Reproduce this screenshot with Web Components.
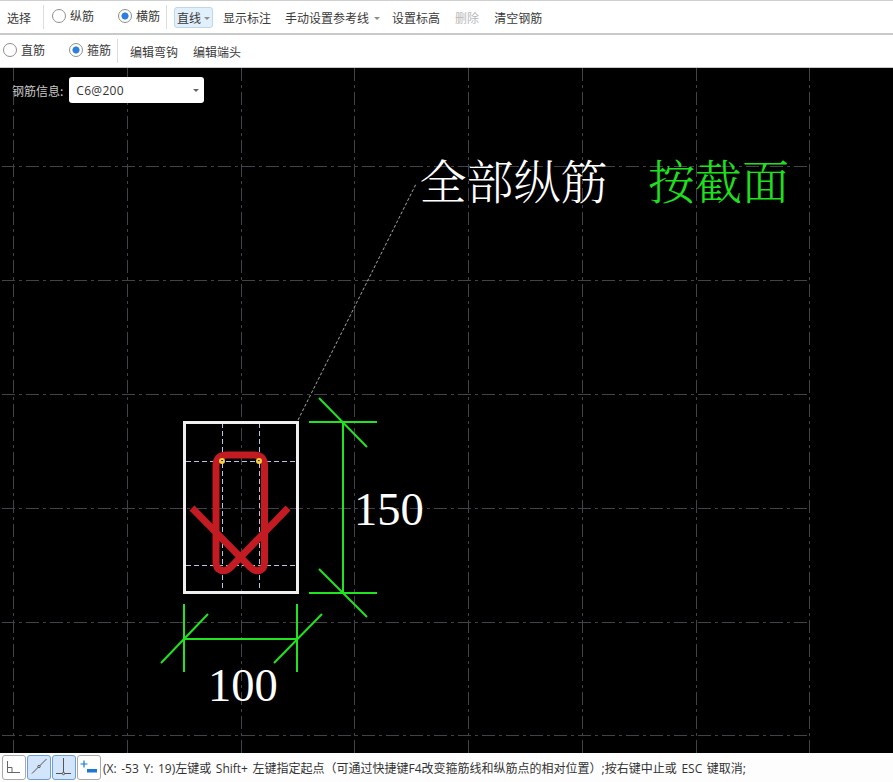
<!DOCTYPE html>
<html lang="zh"><head><meta charset="utf-8"><title>钢筋编辑</title>
<style>
html,body{margin:0;padding:0;height:782px;overflow:hidden;background:#000;font-family:"Open Sans","Noto Sans CJK SC",sans-serif;font-size:12px;color:#333}
</style></head>
<body>
<rebar-app></rebar-app>
<script>
const def=(name,html)=>customElements.define(name,class extends HTMLElement{
  constructor(){super();this.attachShadow({mode:'open'}).innerHTML=html}
});
def('tool-bar',`<style>:host{display:flex;align-items:center;box-sizing:border-box;background:#fff;height:var(--h,33px);border-top:var(--bt,0) solid #cfcfcf;border-bottom:var(--bb,2px) solid #c8c9cb;padding-left:var(--pl,7px);flex:none;white-space:nowrap}</style><slot></slot>`);
def('tool-sep',`<style>:host{display:block;width:1px;height:24px;background:#dcdcdc;flex:none}</style>`);
def('tool-item',`<style>:host{display:inline-flex;align-items:center;height:21px;box-sizing:border-box;font:12px/21px "Open Sans","Noto Sans CJK SC",sans-serif;color:#3a3a3a;flex:none;position:relative;top:1px}
:host([disabled]){color:#b9b9b9}
:host([active]){background:#e2f0fb;border:1px solid #bcd7ee;border-radius:3px;padding:2px 2px 0;line-height:17px;top:0}
i{display:none;width:0;height:0;border:3px solid transparent;border-top-color:#8d8d8d;border-bottom:0;margin-left:var(--cg,4px)}
:host([caret]) i{display:block}</style><slot></slot><i></i>`);
def('radio-opt',`<style>:host{display:inline-flex;align-items:center;gap:4px;font:12px/20px "Open Sans","Noto Sans CJK SC",sans-serif;color:#3a3a3a;flex:none}
b{display:block;box-sizing:border-box;width:14px;height:14px;border:1px solid #8e8e8e;border-radius:50%;background:#fff;position:relative;top:-1px}
:host([checked]) b{background:radial-gradient(circle at center,#2e7fdc 0 3.2px,#fff 3.9px)}
</style><b></b><slot></slot>`);
def('rebar-select',`<style>:host{display:flex;align-items:center;box-sizing:border-box;width:135px;height:26px;background:#fff;border-radius:3px;padding:0 5px 0 7px;font:12px "Open Sans","Liberation Sans",sans-serif;letter-spacing:.3px;color:#333;justify-content:space-between}
i{display:block;border:3px solid transparent;border-top-color:#666;border-bottom:0}</style><slot></slot><i></i>`);
def('rebar-field',`<style>:host{position:absolute;left:12px;top:9px;display:flex;align-items:center;gap:6px;font:12px "Noto Sans CJK SC",sans-serif;color:#c9c9c9;z-index:1}</style><slot></slot>`);
def('snap-btn',`<style>:host{display:block;box-sizing:border-box;width:24px;height:25px;border:1px solid #a9a9a9;border-radius:3px;background:#fff;flex:none}
:host([on]){background:#d3e5fa;border-color:#6d9fd4}
::slotted(svg){display:block;width:22px;height:23px}</style><slot></slot>`);
def('status-bar',`<style>:host{display:flex;align-items:center;box-sizing:border-box;height:29px;background:#fdfdfd;padding-left:2px;gap:1px;flex:none;font:12px "Open Sans","Noto Sans CJK SC",sans-serif;word-spacing:1.5px;color:#333;white-space:nowrap}</style><slot></slot>`);
const H=[166,280,394,508,622,735],V=[13,127,241,354,468,582,696,809];
const grid=H.map(y=>`<line x1="2" x2="809.5" y1="${y+.5}" y2="${y+.5}"/>`).join('')+V.map(x=>`<line x1="${x+.5}" x2="${x+.5}" y1="68" y2="753"/>`).join('');
def('drawing-canvas',`<style>:host{display:block;position:relative;flex:1;background:#000;overflow:hidden}
svg{position:absolute;left:0;top:0}
text{font-family:"Liberation Serif","Noto Sans CJK SC",serif}
.cjk{font-family:"Noto Serif CJK SC","Noto Sans CJK SC",serif;font-size:47px;font-weight:300}
</style><slot></slot>
<svg width="893" height="685" viewBox="0 68 893 685">
<g stroke="#42424a" stroke-width="1" stroke-dasharray="13 4 3 4" fill="none">${grid}</g>
<path d="M298 420L416 184" stroke="#a8a8a8" stroke-width="1" stroke-dasharray="3 2" fill="none"/>
<g stroke="#b7c4e4" stroke-width="1" stroke-dasharray="5 3" fill="none">
<path d="M222.5 423V592M259.5 423V592M186 461.5H296M186 565.5H296"/></g>
<rect x="184.5" y="422.5" width="113" height="170" fill="none" stroke="#efefef" stroke-width="3"/>
<path d="M192 508L250 567C256 573 264.5 572 264.5 562V466Q264.5 455 253.5 455H227Q216 455 216 466V562C216 572 225 573 231 567L288 508" fill="none" stroke="#c31b22" stroke-width="7"/>
<g fill="none" stroke="#f4d33a" stroke-width="2"><circle cx="222" cy="461" r="2"/><circle cx="259" cy="461" r="2"/></g>
<g stroke="#1fe41f" stroke-width="2" fill="none">
<path d="M343 422V593M309 422H377M309 593H377M319 398L367 447M319 569L367 617"/>
<path d="M184 639H297M184 604V672M297 604V672M161 663L208 614M274 663L322 614"/></g>
<text x="354" y="525" font-size="46.5" fill="#fff">150</text>
<text x="208" y="701" font-size="46.5" fill="#fff">100</text>
<text class="cjk" x="419.500" y="199" fill="#fff">全部纵筋</text>
<text class="cjk" x="648" y="199" fill="#1fe01f">按截面</text>
</svg>`);
def('rebar-app',`<style>:host{display:flex;flex-direction:column;width:893px;height:782px}</style>
<tool-bar style="--h:35px;--bt:1px">
 <tool-item>选择</tool-item><tool-sep style="margin:0 8px 0 12px"></tool-sep>
 <radio-opt>纵筋</radio-opt><radio-opt checked style="margin-left:24px">横筋</radio-opt>
 <tool-sep style="margin:0 7px 0 6px"></tool-sep>
 <tool-item active caret style="--cg:3px">直线</tool-item>
 <tool-item style="margin-left:10px">显示标注</tool-item>
 <tool-item caret style="margin-left:14px;--cg:5px">手动设置参考线</tool-item>
 <tool-item style="margin-left:12px">设置标高</tool-item>
 <tool-item disabled style="margin-left:15px">删除</tool-item>
 <tool-item style="margin-left:15px">清空钢筋</tool-item>
</tool-bar>
<tool-bar style="--h:33px;--bb:1px;--pl:3px">
 <radio-opt>直筋</radio-opt><radio-opt checked style="margin-left:24px">箍筋</radio-opt>
 <tool-sep style="margin:0 12px 0 6px"></tool-sep>
 <tool-item>编辑弯钩</tool-item><tool-item style="margin-left:15px">编辑端头</tool-item>
</tool-bar>
<drawing-canvas><rebar-field>钢筋信息:<rebar-select>C6@200</rebar-select></rebar-field></drawing-canvas>
<status-bar>
 <snap-btn><svg viewBox="0 0 22 23" fill="none" stroke="#666" stroke-width="1"><path d="M4.500 5V16.500H17M4.500 11.500H9V16.500"/></svg></snap-btn>
 <snap-btn on><svg viewBox="0 0 22 23" fill="none" stroke="#555" stroke-width="1"><path d="M4 17.500L18.500 3"/><circle cx="11" cy="10.500" r="1.200" fill="#d3e5fa"/></svg></snap-btn>
 <snap-btn on><svg viewBox="0 0 22 23" fill="none" stroke="#555" stroke-width="1"><path d="M10.500 2V17.500M3 17.500H18"/><circle cx="10.500" cy="17.500" r="1.200" fill="#d3e5fa"/></svg></snap-btn>
 <snap-btn><svg viewBox="0 0 22 23" fill="none" stroke="#1a78d6" stroke-width="1.200"><path d="M6 4.500V11.500M2.500 8H9.500"/><rect x="9" y="13" width="10" height="3.500" fill="#1a78d6" stroke="none"/></svg></snap-btn>
 <span style="margin-left:1px">(X: -53 Y: 19)左键或 Shift+ 左键指定起点（可通过快捷键F4改变箍筋线和纵筋点的相对位置）;按右键中止或 ESC 键取消;</span>
</status-bar>`);
</script>
</body></html>
